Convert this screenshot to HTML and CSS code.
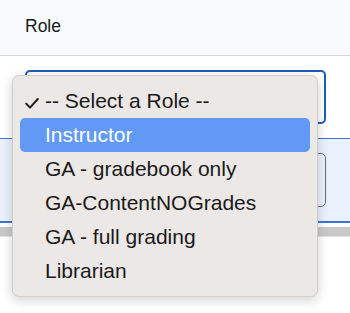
FILE: index.html
```html
<!DOCTYPE html>
<html lang="en">
<head>
    <meta charset="UTF-8">
    <meta name="viewport" content="width=device-width, initial-scale=1.0">
    <title>Role</title>
    <link rel="stylesheet" href="styles.css">
</head>
<body>
    <header class="field-head">
        <span class="field-label">Role</span>
    </header>

    <section class="field-body">
        <div class="role-select"></div>
    </section>

    <section class="next-row">
        <div class="next-select"></div>
    </section>

    <div class="scroll-bar"></div>

    <ul class="role-menu">
        <li class="role-option selected"><svg class="check" width="14" height="11" viewBox="0 0 14 11"><path d="M1.2 5.6 L5 9.6 L12.8 1" fill="none" stroke="#1d1d1f" stroke-width="2" stroke-linecap="round" stroke-linejoin="round"/></svg>-- Select a Role --</li>
        <li class="role-option active">Instructor</li>
        <li class="role-option">GA - gradebook only</li>
        <li class="role-option">GA-ContentNOGrades</li>
        <li class="role-option">GA - full grading</li>
        <li class="role-option">Librarian</li>
    </ul>
</body>
</html>
```

FILE: styles.css
```css
body {
    margin: 0;
    font-family: 'Liberation Sans', Arial, sans-serif;
    color: #1a1a1a;
    background-color: #fff;
    position: relative;
    height: 313px;
    overflow: hidden;
}
.field-head {
    height: 55px;
    background-color: #f8f9fc;
    border-bottom: 1px solid #d3d6dc;
    display: flex;
    align-items: center;
    padding-left: 25px;
}
.field-label {
    font-size: 17.5px;
    margin-top: -3px;
}
.field-body {
    padding: 14px 24px 14px 25px;
}
.role-select {
    height: 50px;
    border: 2px solid #1f5cb3;
    border-radius: 5px;
}
.next-row {
    background-color: #e9f2fc;
    border-top: 1px solid #3d73cf;
    border-bottom: 2px solid #3d73cf;
    padding: 14px 24px 0 25px;
    box-sizing: border-box;
    height: 85px;
}
.next-select {
    height: 52px;
    border: 1px solid #707070;
    border-radius: 5px;
}
.scroll-bar {
    margin-top: 4px;
    height: 9px;
    background-color: #c9c9c9;
    border-bottom: 1px solid #e2e2e2;
}
.role-menu {
    position: absolute;
    top: 75px;
    left: 12px;
    width: 290px;
    margin: 0;
    padding: 8px 7px;
    list-style: none;
    background-color: #ece8e5;
    border: 1px solid #d2cdc9;
    border-radius: 7px;
    box-shadow: 0 3px 12px rgba(0, 0, 0, 0.18);
}
.role-option {
    position: relative;
    height: 34px;
    line-height: 33px;
    padding-left: 25px;
    font-size: 21px;
    border-radius: 5px;
}
.role-option.active {
    background-color: #6199f5;
    color: #fff;
}
.check {
    position: absolute;
    left: 5px;
    top: 14px;
}
```
